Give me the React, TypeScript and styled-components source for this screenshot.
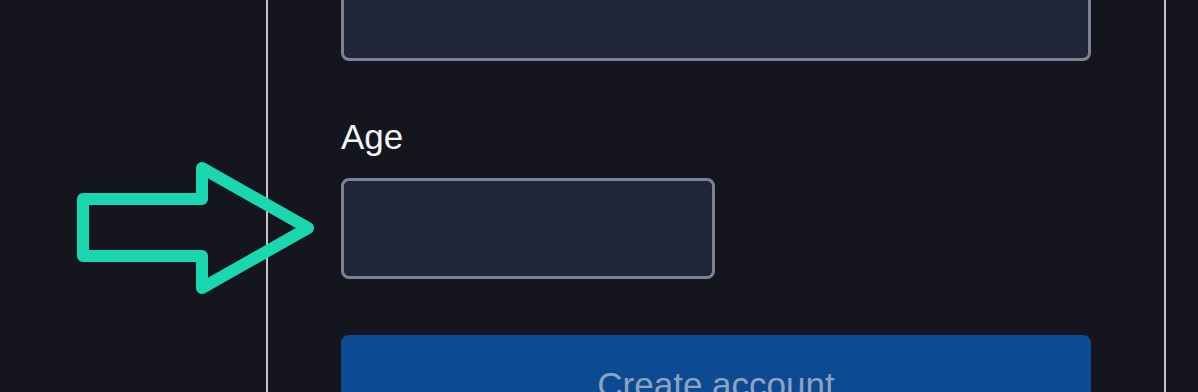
import { FC } from 'react'
import styled, { createGlobalStyle } from 'styled-components'

const GlobalStyle = createGlobalStyle`
  html, body {
    margin: 0;
    padding: 0;
    background: #15161d;
    font-family: 'Liberation Sans', Arial, sans-serif;
    overflow: hidden;
  }
`

const App: FC = () => {
  return (
    <Page>
      <GlobalStyle />
      <Card>
        <Form>
          <Input $width={750} $offset={-40} />
          <Label>Age</Label>
          <Input $width={374} />
          <SubmitButton disabled>Create account</SubmitButton>
        </Form>
      </Card>
      {/* annotation arrow drawn over the page */}
      <Arrow width="260" height="160" viewBox="0 0 260 160">
        <path
          d="M13 56 H132 V25 L238 85 L132 145 V113 H13 Z"
          fill="none"
          stroke="#19d8b0"
          strokeWidth="12"
          strokeLinejoin="round"
        />
      </Arrow>
    </Page>
  )
}

export default App

const Page = styled.div`
  position: relative;
  display: flex;
  width: 1198px;
  height: 392px;
  overflow: hidden;
`

const Card = styled.div`
  flex: none;
  margin-left: 266px;
  width: 900px;
  height: 100%;
  box-sizing: border-box;
  border-left: 2px solid #c3c6cf;
  border-right: 2px solid #c3c6cf;
  padding-left: 73px;
`

const Form = styled.div`
  display: flex;
  flex-direction: column;
  align-items: flex-start;
  width: 750px;
`

const Input = styled.div<{ $width: number; $offset?: number }>`
  width: ${(p) => p.$width}px;
  height: 101px;
  margin-top: ${(p) => p.$offset ?? 0}px;
  box-sizing: border-box;
  background: #1f2638;
  border: 3px solid #7d8294;
  border-radius: 8px;
`

const Label = styled.label`
  margin-top: 55px;
  margin-bottom: 20px;
  font-size: 35px;
  line-height: 42px;
  color: #f4f5f7;
`

const SubmitButton = styled.button`
  margin-top: 56px;
  width: 750px;
  height: 100px;
  border: none;
  border-radius: 8px;
  background: #0c4a93;
  color: #8ea3be;
  font-family: 'Liberation Sans', Arial, sans-serif;
  font-size: 35px;
  padding: 0;
`

const Arrow = styled.svg`
  position: absolute;
  left: 70px;
  top: 143px;
`
